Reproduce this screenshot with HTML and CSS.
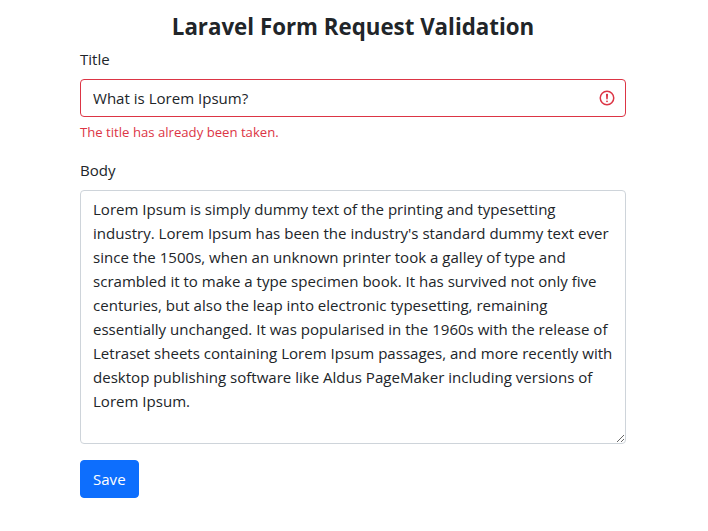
FILE: index.html
```html
<!DOCTYPE html>
<html lang="en">
<head>
    <meta charset="UTF-8">
    <meta name="viewport" content="width=device-width, initial-scale=1.0">
    <title>Laravel Form Request Validation</title>
    <link rel="stylesheet" href="styles.css">
</head>
<body>
    <div class="container">
        <h1>Laravel Form Request Validation</h1>
        <form>
            <div class="form-group">
                <label for="title">Title</label>
                <div class="input-wrap">
                    <input type="text" id="title" class="invalid" value="What is Lorem Ipsum?">
                    <svg class="invalid-icon" viewBox="0 0 12 12" width="18" height="18" fill="none" stroke="#dc3545">
                        <circle cx="6" cy="6" r="4.5"/>
                        <path stroke-linejoin="round" d="M5.8 3.6h.4L6 6.5z"/>
                        <circle cx="6" cy="8.2" r=".6" fill="#dc3545" stroke="none"/>
                    </svg>
                </div>
                <div class="error-text">The title has already been taken.</div>
            </div>
            <div class="form-group">
                <label for="body">Body</label>
                <textarea id="body" rows="10">Lorem Ipsum is simply dummy text of the printing and typesetting industry. Lorem Ipsum has been the industry's standard dummy text ever since the 1500s, when an unknown printer took a galley of type and scrambled it to make a type specimen book. It has survived not only five centuries, but also the leap into electronic typesetting, remaining essentially unchanged. It was popularised in the 1960s with the release of Letraset sheets containing Lorem Ipsum passages, and more recently with desktop publishing software like Aldus PageMaker including versions of Lorem Ipsum.</textarea>
            </div>
            <button type="button">Save</button>
        </form>
    </div>
</body>
</html>
```

FILE: styles.css
```css
* {
    box-sizing: border-box;
}
body {
    margin: 0;
    background-color: #fff;
    color: #212529;
    font-family: "Open Sans", "Noto Sans", sans-serif;
    font-size: 15.05px;
    line-height: 24px;
}
.container {
    width: 546px;
    margin-left: 80px;
    padding-top: 10px;
}
h1 {
    margin: 0 0 3px;
    text-align: center;
    font-size: 22.3px;
    line-height: 34px;
    font-weight: 700;
}
.form-group {
    margin-bottom: 16px;
}
label {
    display: block;
    margin-bottom: 8px;
}
.input-wrap {
    position: relative;
}
input, textarea {
    display: block;
    width: 100%;
    padding: 6px 12px;
    border: 1px solid #ced4da;
    border-radius: 4px;
    color: #212529;
    font: inherit;
}
input.invalid {
    height: 38px;
    padding-right: 40px;
    border-color: #dc3545;
}
.invalid-icon {
    position: absolute;
    top: 10px;
    right: 10px;
}
.error-text {
    margin-top: 5px;
    color: #dc3545;
    font-size: 13.15px;
    line-height: 20px;
}
textarea {
    height: 254px;
    resize: vertical;
}
button {
    padding: 6px 12px;
    border: 1px solid #0d6efd;
    border-radius: 4px;
    background-color: #0d6efd;
    color: #fff;
    font: inherit;
}
```
